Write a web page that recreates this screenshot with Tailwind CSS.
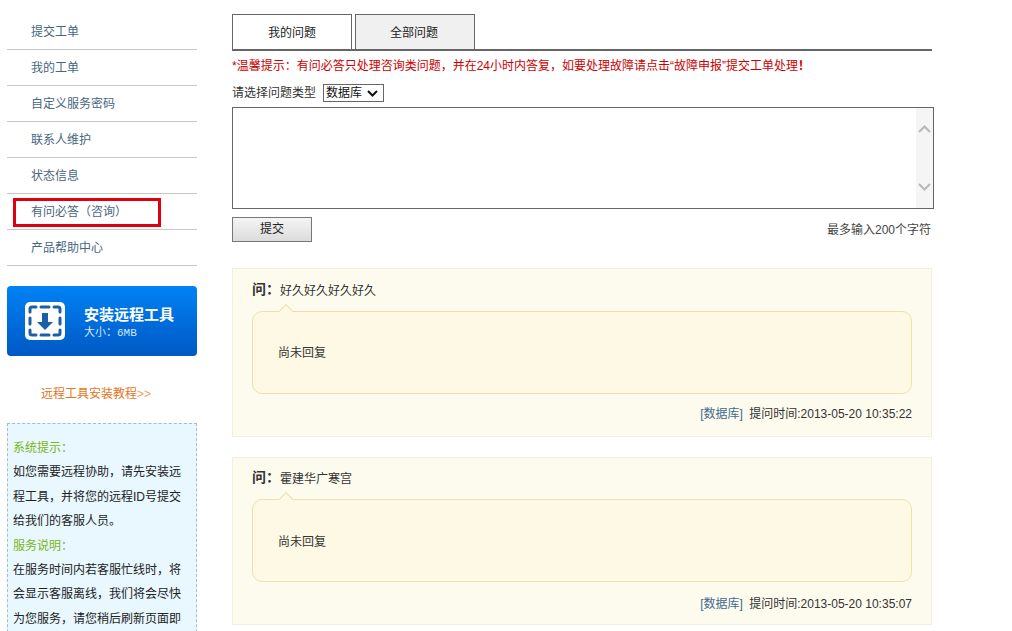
<!doctype html>
<html>
  <head>
    <meta charset="UTF-8" />
    <title>有问必答</title>
    <script src="https://cdn.jsdelivr.net/npm/@tailwindcss/browser@4"></script>
  </head>
  <body class="bg-white h-[631px] overflow-hidden font-['Liberation_Sans','Noto_Sans_CJK_SC',sans-serif] text-[12px] text-[#333]">
    <div class="flex items-start">
      <!-- sidebar -->
      <div class="ml-[7px] w-[190px] pt-[14px] shrink-0">
        <ul class="text-[#46677f]">
          <li class="h-[36px] leading-[36px] pl-[24px] border-b border-[#c8c8c8]">提交工单</li>
          <li class="h-[36px] leading-[36px] pl-[24px] border-b border-[#c8c8c8]">我的工单</li>
          <li class="h-[36px] leading-[36px] pl-[24px] border-b border-[#c8c8c8]">自定义服务密码</li>
          <li class="h-[36px] leading-[36px] pl-[24px] border-b border-[#c8c8c8]">联系人维护</li>
          <li class="h-[36px] leading-[36px] pl-[24px] border-b border-[#c8c8c8]">状态信息</li>
          <li class="relative h-[36px] leading-[36px] pl-[24px] border-b border-[#c8c8c8]">
            有问必答（咨询）
            <span class="absolute left-[6px] top-[4px] w-[148px] h-[29px] border-[3px] border-[#e0000f]"></span>
          </li>
          <li class="h-[36px] leading-[36px] pl-[24px] border-b border-[#c8c8c8]">产品帮助中心</li>
        </ul>

        <div class="mt-[20px] h-[70px] rounded-[4px] bg-gradient-to-b from-[#0082f5] to-[#0059c4] flex items-center pl-[18px]">
          <svg class="w-[40px] h-[38px]" viewBox="0 0 40 38">
            <rect x="0" y="0" width="40" height="38" rx="5" fill="#fff" />
            <g fill="none" stroke="#1a5fa8" stroke-width="3" stroke-linecap="round">
              <path d="M5 10V7a2 2 0 0 1 2-2h4" />
              <path d="M29 5h4a2 2 0 0 1 2 2v3" />
              <path d="M5 28v3a2 2 0 0 0 2 2h4" />
              <path d="M29 33h4a2 2 0 0 0 2-2v-3" />
              <path d="M16 5h8M16 33h8M5 16v6M35 16v6" />
            </g>
            <path d="M17 11h6v9h5l-8 8-8-8h5z" fill="#1a5fa8" />
          </svg>
          <div class="ml-[19px] pt-[4px] text-white">
            <div class="text-[15px] leading-[20px] font-bold">安装远程工具</div>
            <div class="text-[11px] leading-[17px] text-[#cfe6ff] font-['Liberation_Mono','Noto_Sans_CJK_SC',monospace]">大小：6MB</div>
          </div>
        </div>

        <div class="mt-[28px] pl-[34px] leading-[20px] text-[#e5741a]">远程工具安装教程<span class="text-[#f0a060]">&gt;&gt;</span></div>

        <div class="mt-[19px] h-[300px] border border-dashed border-[#9cc0cc] bg-[#e8f8fe] px-[5px] pt-[12px] leading-[24.4px] text-[#222]">
          <div class="text-[#7cb518]">系统提示：</div>
          <p>如您需要远程协助，请先安装远程工具，并将您的远程ID号提交给我们的客服人员。</p>
          <div class="text-[#7cb518]">服务说明：</div>
          <p>在服务时间内若客服忙线时，将会显示客服离线，我们将会尽快为您服务，请您稍后刷新页面即</p>
        </div>
      </div>

      <!-- main -->
      <div class="ml-[35px] w-[702px] pt-[14px]">
        <div class="w-[700px] h-[37px] flex gap-[3px] border-b-2 border-[#666]">
          <div class="w-[120px] h-[35px] leading-[36px] text-center border border-b-0 border-[#666] bg-white text-[#222]">我的问题</div>
          <div class="w-[120px] h-[35px] leading-[36px] pr-[2px] text-center border border-b-0 border-[#666] bg-[#f0f0f0] text-[#222]">全部问题</div>
        </div>
        <p class="mt-[6px] leading-[18px] text-[#cc0000]">*温馨提示：有问必答只处理咨询类问题，并在24小时内答复，如要处理故障请点击“故障申报”提交工单处理<b>！</b></p>
        <div class="mt-[9px] h-[18px] flex items-center">
          <span class="text-[#333]">请选择问题类型</span>
          <div class="ml-[7px] w-[61px] h-[18px] border border-[#666] flex items-center pl-[2px] text-[#111]">
            数据库
            <svg class="ml-[5px] w-[11px] h-[7px]" viewBox="0 0 11 7"><path d="M1 1l4.500 4.500L10 1" fill="none" stroke="#111" stroke-width="2" /></svg>
          </div>
        </div>
        <div class="mt-[5px] h-[102px] border border-[#666] flex justify-end">
          <div class="w-[17px] bg-[#f5f5f5] flex flex-col justify-between items-center pt-[17px] pb-[17px]">
            <svg class="w-[13px] h-[8px]" viewBox="0 0 13 8"><path d="M1 7l5.500-5.500L12 7" fill="none" stroke="#b8b8b8" stroke-width="2" /></svg>
            <svg class="w-[13px] h-[8px]" viewBox="0 0 13 8"><path d="M1 1l5.500 5.500L12 1" fill="none" stroke="#b8b8b8" stroke-width="2" /></svg>
          </div>
        </div>
        <div class="mt-[8px] w-[700px] flex justify-between items-center">
          <div class="w-[80px] h-[25px] leading-[23px] text-center border border-[#777] bg-gradient-to-b from-[#f4f4f4] to-[#dcdcdc] text-[#222]">提交</div>
          <span class="pr-[1px] text-[#444]">最多输入200个字符</span>
        </div>

        <!-- question 1 -->
        <div class="mt-[26px] w-[700px] h-[169px] border border-[#f3efdc] bg-[#fdfbee] pt-[12px] px-[19px]">
          <div class="h-[20px] flex items-center">
            <b class="mb-[3px] text-[14px] text-[#333]">问：</b><span class="text-[#333]">好久好久好久好久</span>
          </div>
          <div class="relative mt-[10px] h-[83px] rounded-[10px] border border-[#ebe2ae] bg-[#fdf9e4] pl-[25px] pt-[32px] leading-[18px] text-[#333]">
            尚未回复
            <span class="absolute left-[28px] top-[-6px] w-[10px] h-[10px] rotate-45 border-l border-t border-[#ebe2ae] bg-[#fdf9e4]"></span>
          </div>
          <div class="mt-[11px] text-right leading-[18px] text-[#333]"><span class="mr-[3px] text-[#3f6a8f]">[数据库]</span> 提问时间:2013-05-20 10:35:22</div>
        </div>

        <!-- question 2 -->
        <div class="mt-[20px] w-[700px] h-[168px] border border-[#f3efdc] bg-[#fdfbee] pt-[11px] px-[19px]">
          <div class="h-[20px] flex items-center">
            <b class="mb-[3px] text-[14px] text-[#333]">问：</b><span class="text-[#333]">霍建华广寒宫</span>
          </div>
          <div class="relative mt-[10px] h-[83px] rounded-[10px] border border-[#ebe2ae] bg-[#fdf9e4] pl-[25px] pt-[33px] leading-[18px] text-[#333]">
            尚未回复
            <span class="absolute left-[28px] top-[-6px] w-[10px] h-[10px] rotate-45 border-l border-t border-[#ebe2ae] bg-[#fdf9e4]"></span>
          </div>
          <div class="mt-[13px] text-right leading-[18px] text-[#333]"><span class="mr-[3px] text-[#3f6a8f]">[数据库]</span> 提问时间:2013-05-20 10:35:07</div>
        </div>
      </div>
    </div>
  </body>
</html>
